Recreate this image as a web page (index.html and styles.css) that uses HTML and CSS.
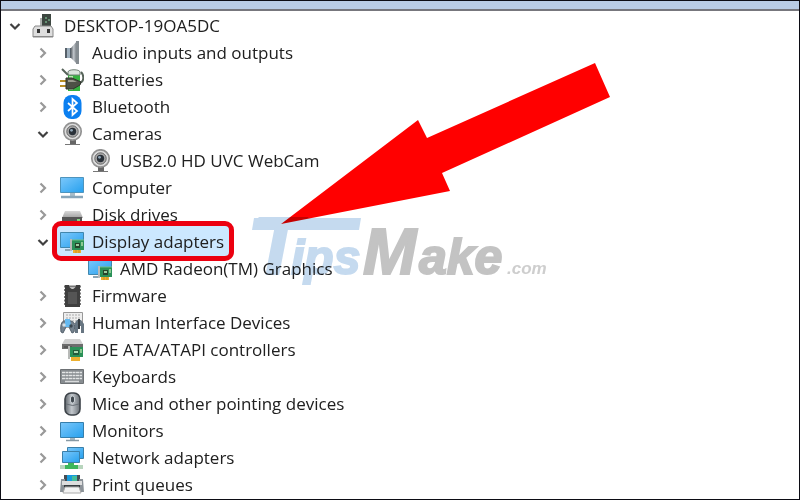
FILE: index.html
```
<!DOCTYPE html>
<html lang="en">
<head>
<meta charset="utf-8">
<title>Device Manager</title>
<link rel="stylesheet" href="styles.css">
</head>
<body>
<svg class="defs" aria-hidden="true">
  <defs>
    <linearGradient id="screen" x1="0" y1="0" x2="1" y2="1"><stop offset="0" stop-color="#7cc8fb"/><stop offset="1" stop-color="#26a0ee"/></linearGradient>
    <linearGradient id="metal" x1="0" y1="0" x2="1" y2="0"><stop offset="0" stop-color="#60666c"/><stop offset=".45" stop-color="#c3c8cd"/><stop offset="1" stop-color="#6b7177"/></linearGradient>
    <linearGradient id="drive" x1="0" y1="0" x2="0" y2="1"><stop offset="0" stop-color="#d8d8d8"/><stop offset="1" stop-color="#a0a0a0"/></linearGradient>
    <symbol id="right" viewBox="0 0 20 20"><path d="M7.500 5.500l4.500 4.500-4.500 4.500" fill="none" stroke="#999" stroke-width="2.200"/></symbol>
    <symbol id="down" viewBox="0 0 20 20"><path d="M5.500 8l4.500 4.500L14.500 8" fill="none" stroke="#404040" stroke-width="2.200"/></symbol>
    <symbol id="pc" viewBox="0 0 24 24">
      <path d="M10 0h9v12h-9z" fill="#3d4741"/><path d="M13 3h2v2h-2zM16 5h2v2h-2zM13 7h2v2h-2z" fill="#659173"/><path d="M8 4h2v8H8z" fill="#aeb2b0"/>
      <path d="M3 12h16l2 3v8H1v-8z" fill="#dedede" stroke="#8a8a8a"/><path d="M1 22.500h20" stroke="#888"/><path d="M5 15h3v4H5zM15 15h3v4h-3z" fill="#353535"/>
    </symbol>
    <symbol id="speaker" viewBox="0 0 24 24"><path d="M5 7h7v10H5z" fill="#566069"/><path d="M7 7h3v10H7z" fill="#9eafbd"/><path d="M11 7l6-7v23l-6-6z" fill="url(#metal)"/><path d="M16 0h3v23h-3z" fill="#858c91"/></symbol>
    <symbol id="battery" viewBox="0 0 24 24">
      <path d="M8 3h12v20H8z" fill="#34b33f"/><path d="M8 4c0-3 12-3 12 0v3H8z" fill="#d9e4dc" stroke="#718076"/><path d="M9 8h4v14H9z" fill="#b3eaae"/>
      <path d="M2 1l6 6M18 15c7 0 6-8 3-11" fill="none" stroke="#57645a" stroke-width="2"/>
      <path d="M0 13h7M0 18h7" stroke="#b98f25" stroke-width="2"/><path d="M6 10h6l9 4-1 3-7 4H6z" fill="#4d5146" stroke="#30342d"/><path d="M8 12h5l4 2H8z" fill="#9a9c8f"/>
    </symbol>
    <symbol id="bluetooth" viewBox="0 0 24 24"><rect x="3.500" width="18" height="24" rx="8" fill="#0b7ff0"/><path d="M8 8l9 8-4.500 4V4L17 8l-9 8" fill="none" stroke="#fff" stroke-width="1.700"/></symbol>
    <symbol id="camera" viewBox="0 0 24 24"><path d="M10 17h6v5h-6z" fill="#666"/><path d="M5 22.500h15" stroke="#777"/><circle cx="12.500" cy="9.500" r="8.700" fill="#ddd" stroke="#929292" stroke-width="1.700"/><circle cx="12.500" cy="9.500" r="5.700" fill="#aaa" stroke="#666"/><circle cx="12.500" cy="9.500" r="3.700" fill="#293038"/><circle cx="11.500" cy="8.300" r="1.400" fill="#91a7b8"/></symbol>
    <symbol id="monitor" viewBox="0 0 24 24"><path d="M.5 3.500h23v15H.5z" fill="url(#screen)" stroke="#367fac"/><path d="M10 19h5v2h-5z" fill="#a4b7c2"/><path d="M6 21.500h13" stroke="#8799a4" stroke-width="1.500"/></symbol>
    <symbol id="computer" viewBox="0 0 24 24"><path d="M.5 1.500h23v15H.5z" fill="url(#screen)" stroke="#4e94bd"/><path d="M10 17h5v3h-5z" fill="#a8bdc9"/><path d="M1 21h22" stroke="#89a6b9" stroke-width="2.500"/></symbol>
    <symbol id="disk" viewBox="0 0 24 24"><path d="M5 8h15l3 7H2z" fill="url(#drive)"/><path d="M2 14h20v8H2z" fill="#555"/><path d="M17 16h3v2h-3z" fill="#82d481"/></symbol>
    <symbol id="card" viewBox="0 0 24 24"><path d="M12 10h12v10H12z" fill="#2b9158"/><path d="M12 10h12" stroke="#72bf84"/><path d="M11 9v12" stroke="#b8bab8" stroke-width="2"/><path d="M15 13h5v5h-5z" fill="#26452b"/><path d="M16 14h3v2h-3z" fill="#9dce9e"/><path d="M21 12h2v4h-2z" fill="#8aca91"/><path d="M13 20h8v3h-8z" fill="#edb02f"/><path d="M16 20v3M19 20v3" stroke="#b87a1a" stroke-width=".6"/></symbol>
    <symbol id="display" viewBox="0 0 24 24"><path d="M.5 2.500h23v15H.5z" fill="url(#screen)" stroke="#4187ad"/><path d="M5 20h7" stroke="#8ba5b5" stroke-width="2"/><use href="#card"/></symbol>
    <symbol id="chip" viewBox="0 0 24 24"><path d="M4 2.500h17M4 6h17M4 9.500h17M4 13h17M4 16.500h17M4 20h17" stroke="#777" stroke-width="2"/><path d="M5 1h4c0 5 7 5 7 0h4v22H5z" fill="#3f3f3f"/><path d="M8 8h9v12H8z" fill="#555"/></symbol>
    <symbol id="hid" viewBox="0 0 24 24"><path d="M3.500 1.500h19v11h-19z" fill="#eee" stroke="#999"/><path d="M6 4h15M6 7h15M6 10h15" stroke="#aaa" stroke-dasharray="2 1"/><path d="M1 21c-1-8 1-12 5-11h5c4 1 4 5 3 11l-2 1-3-6H6l-3 6z" fill="#76838f" stroke="#53606b"/><path d="M5 8h5l1 8H5z" fill="#65baf1"/><circle cx="4" cy="14" r="1.700" fill="#d5dee5"/><circle cx="11" cy="15" r="1.700" fill="#39464f"/><path d="M15 22V12l2-3h4l3 4v9h-3v-7h-3v7z" fill="#687682"/><path d="M18 8h2v10h-2z" fill="#343b40"/></symbol>
    <symbol id="ide" viewBox="0 0 24 24"><path d="M5 1h15l3 5H2z" fill="#d0d0d0"/><path d="M2 6h21v5H2z" fill="#6d6d6d"/><path d="M4 9h8" stroke="#444"/><path d="M10 9h13v10H10z" fill="#2b9158"/><path d="M9 8v13" stroke="#b8bab8" stroke-width="2"/><path d="M13 12h6v5h-6z" fill="#235b3b"/><path d="M14 13h4v2h-4z" fill="#a9d9b0"/><path d="M20 11h2v4h-2z" fill="#8aca91"/><path d="M11 19h9v4h-9z" fill="#edb02f"/></symbol>
    <symbol id="keyboard" viewBox="0 0 24 24"><path d="M.5 4.500h23v14H.5z" fill="#878c90" stroke="#6d7174"/><path d="M2 7.500h20M2 10.500h20M2 13.500h20" stroke="#e3e5e6" stroke-width="1.600" stroke-dasharray="3 .5"/><path d="M5 16.500h14" stroke="#d8dadb" stroke-width="1.500"/></symbol>
    <symbol id="mouse" viewBox="0 0 24 24"><rect x="5" y="1" width="15" height="22" rx="6" fill="url(#metal)" stroke="#3d4349" stroke-width="1.600"/><path d="M6 12q7 3 13 0" fill="none" stroke="#697077"/><rect x="10.500" y="4" width="4" height="7" rx="2" fill="#414950" stroke="#cbd1d6"/></symbol>
    <symbol id="network" viewBox="0 0 24 24"><path d="M7.500 1.500h16v11h-16z" fill="url(#screen)" stroke="#3b80a9"/><path d="M2.500 5.500h17v11h-17z" fill="url(#screen)" stroke="#3b80a9"/><path d="M8 17h6v2h4v4H5v-4h3z" fill="#3db75b"/><path d="M0 19h5v4H0zM18 19h5v4h-5z" fill="#b8d5bd"/></symbol>
    <symbol id="printer" viewBox="0 0 24 24"><path d="M4 2h16v7H4z" fill="#454d54"/><path d="M7 2h10v6H7z" fill="#169bdc"/><path d="M12 3h5v5h-5z" fill="#42bd9c"/><path d="M1 6h4v3h14V6h4l1 13H0z" fill="#8b9298"/><path d="M2 8h20v4H2z" fill="#ddd"/><path d="M4 12h16v4H4z" fill="#373c40"/><path d="M5 14h14l2 6H3z" fill="#f3f3f3" stroke="#aaa"/></symbol>
  </defs>
</svg>
<main class="window">
  <div class="toolbar-edge"></div>
  <ul class="tree">
    <li>
      <div class="row"><button class="toggle" aria-label="Collapse computer"><svg><use href="#down"/></svg></button><svg class="icon"><use href="#pc"/></svg><span>DESKTOP-19OA5DC</span></div>
      <ul>
        <li class="row"><button class="toggle" aria-label="Expand"><svg><use href="#right"/></svg></button><svg class="icon"><use href="#speaker"/></svg><span>Audio inputs and outputs</span></li>
        <li class="row"><button class="toggle" aria-label="Expand"><svg><use href="#right"/></svg></button><svg class="icon"><use href="#battery"/></svg><span>Batteries</span></li>
        <li class="row"><button class="toggle" aria-label="Expand"><svg><use href="#right"/></svg></button><svg class="icon"><use href="#bluetooth"/></svg><span>Bluetooth</span></li>
        <li>
          <div class="row"><button class="toggle" aria-label="Collapse"><svg><use href="#down"/></svg></button><svg class="icon"><use href="#camera"/></svg><span>Cameras</span></div>
          <ul><li class="row leaf"><svg class="icon"><use href="#camera"/></svg><span>USB2.0 HD UVC WebCam</span></li></ul>
        </li>
        <li class="row"><button class="toggle" aria-label="Expand"><svg><use href="#right"/></svg></button><svg class="icon"><use href="#computer"/></svg><span>Computer</span></li>
        <li class="row"><button class="toggle" aria-label="Expand"><svg><use href="#right"/></svg></button><svg class="icon"><use href="#disk"/></svg><span>Disk drives</span></li>
        <li>
          <div class="row"><button class="toggle" aria-label="Collapse"><svg><use href="#down"/></svg></button><div class="selected"><svg class="icon"><use href="#display"/></svg><span>Display adapters</span></div></div>
          <ul><li class="row leaf"><svg class="icon"><use href="#display"/></svg><span>AMD Radeon(TM) Graphics</span></li></ul>
        </li>
        <li class="row"><button class="toggle" aria-label="Expand"><svg><use href="#right"/></svg></button><svg class="icon"><use href="#chip"/></svg><span>Firmware</span></li>
        <li class="row"><button class="toggle" aria-label="Expand"><svg><use href="#right"/></svg></button><svg class="icon"><use href="#hid"/></svg><span>Human Interface Devices</span></li>
        <li class="row"><button class="toggle" aria-label="Expand"><svg><use href="#right"/></svg></button><svg class="icon"><use href="#ide"/></svg><span>IDE ATA/ATAPI controllers</span></li>
        <li class="row"><button class="toggle" aria-label="Expand"><svg><use href="#right"/></svg></button><svg class="icon"><use href="#keyboard"/></svg><span>Keyboards</span></li>
        <li class="row"><button class="toggle" aria-label="Expand"><svg><use href="#right"/></svg></button><svg class="icon"><use href="#mouse"/></svg><span>Mice and other pointing devices</span></li>
        <li class="row"><button class="toggle" aria-label="Expand"><svg><use href="#right"/></svg></button><svg class="icon"><use href="#monitor"/></svg><span>Monitors</span></li>
        <li class="row"><button class="toggle" aria-label="Expand"><svg><use href="#right"/></svg></button><svg class="icon"><use href="#network"/></svg><span>Network adapters</span></li>
        <li class="row"><button class="toggle" aria-label="Expand"><svg><use href="#right"/></svg></button><svg class="icon"><use href="#printer"/></svg><span>Print queues</span></li>
      </ul>
    </li>
  </ul>
  <svg class="arrow" viewBox="0 0 330 162" aria-hidden="true"><path d="M0 161L137 57l9 18L314 0l15 34-168 76 8 18z" fill="#f00"/></svg>
  <svg class="watermark" viewBox="0 0 300 76" role="img" aria-label="TipsMake.com">
    <path d="M3 1h107l-2 12H1z" fill="#c5daef"/>
    <g class="brand">
      <text class="blue" x="1" y="57" font-size="81">T</text>
      <text class="blue" x="40" y="57" font-size="48">ips</text>
      <text class="gray" x="112" y="57" font-size="64">M</text>
      <text class="gray" x="168" y="57" font-size="50">ake</text>
      <text x="256" y="57" font-size="17" fill="#cecece">.com</text>
    </g>
  </svg>
</main>
</body>
</html>
```
FILE: styles.css
```
* { box-sizing: border-box; }
body { margin: 0; background: #fff; color: #202020; font: 17px/27px "Open Sans", "Noto Sans", sans-serif; }
.defs { position: absolute; width: 0; height: 0; }
.window { position: relative; min-height: 100vh; border: 1px solid #0c0c14; overflow: hidden; }
.toolbar-edge { height: 10px; background: #b9cce5; border-bottom: 2px solid #77777d; }
.tree, .tree ul { list-style: none; margin: 0; padding: 0; }
.tree { padding: 1px 0 0 4px; }
.tree ul { padding-left: 28px; }
.row { display: flex; align-items: center; height: 27px; white-space: nowrap; }
.toggle { width: 20px; height: 20px; margin-right: 7px; padding: 0; border: 0; background: transparent; }
.toggle svg { display: block; width: 20px; height: 20px; }
.icon { flex: none; width: 24px; height: 24px; margin-right: 8px; }
.leaf { padding-left: 27px; }
.selected { position: relative; z-index: 0; display: flex; align-items: center; height: 27px; padding-right: 5px; }
.selected::after { content: ""; position: absolute; z-index: -1; inset: -7px -5px -6px -8px; border: 5px solid #ec0010; border-radius: 9px; background: #cce8ff; }
.arrow { position: absolute; left: 280px; top: 62px; width: 330px; height: 162px; }
.watermark { position: absolute; left: 250px; top: 216px; width: 300px; height: 76px; mix-blend-mode: multiply; }
.brand { font-family: "Liberation Sans", Arial, sans-serif; font-weight: 700; font-style: italic; }
.blue { fill: #c5daef; stroke: #c5daef; stroke-width: 2px; }
.gray { fill: #c3c3c3; stroke: #c3c3c3; stroke-width: 2px; }
```
